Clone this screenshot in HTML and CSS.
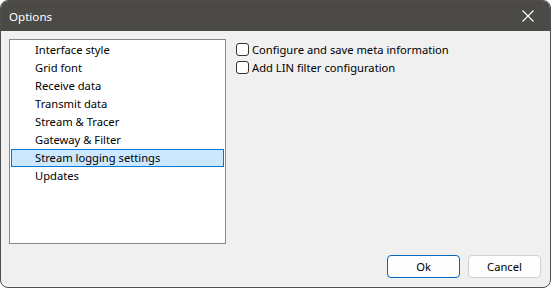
FILE: index.html
```html
<!doctype html>
<html lang="en">
<head>
    <meta charset="UTF-8">
    <title>Options</title>
    <link rel="stylesheet" href="styles.css">
</head>
<body>
    <div class="window">
        <div class="titlebar">
            <span class="title">Options</span>
            <svg class="close" width="12" height="12" viewBox="0 0 12 12">
                <path d="M0.5 0.5 L11.5 11.5 M11.5 0.5 L0.5 11.5" stroke="#fff" stroke-width="1.1" fill="none"/>
            </svg>
        </div>
        <div class="content">
            <div class="main">
                <ul class="list">
                    <li class="item">Interface style</li>
                    <li class="item">Grid font</li>
                    <li class="item">Receive data</li>
                    <li class="item">Transmit data</li>
                    <li class="item">Stream &amp; Tracer</li>
                    <li class="item">Gateway &amp; Filter</li>
                    <li class="item selected">Stream logging settings</li>
                    <li class="item">Updates</li>
                </ul>
                <div class="pane">
                    <label class="check"><span class="box"></span>Configure and save meta information</label>
                    <label class="check"><span class="box"></span>Add LIN filter configuration</label>
                </div>
            </div>
            <div class="footer">
                <button class="btn default">Ok</button>
                <button class="btn">Cancel</button>
            </div>
        </div>
    </div>
</body>
</html>
```

FILE: styles.css
```css
*{
    box-sizing: border-box;
}
body{
    margin: 0;
    background: #fff;
    font-family: "Noto Sans", "Open Sans", sans-serif;
    font-size: 11.2px;
    color: #000;
}
.window{
    width: 551px;
    height: 288px;
    border: 1px solid #4f4e4c;
    border-radius: 8px;
    overflow: hidden;
    background: #f0f0f0;
    display: flex;
    flex-direction: column;
}
.titlebar{
    height: 30px;
    background: #4b4a47;
    display: flex;
    align-items: center;
    justify-content: space-between;
    padding: 0 16px 0 8px;
    flex-shrink: 0;
}
.title{
    color: #fff;
    font-size: 11.6px;
}
.close{
    display: block;
}
.content{
    flex: 1;
    display: flex;
    flex-direction: column;
    padding: 8px 9px 9px 8px;
}
.main{
    display: flex;
    gap: 10px;
}
.list{
    list-style: none;
    margin: 0;
    width: 217px;
    height: 205px;
    padding: 1px;
    border: 1px solid #828790;
    background: #fff;
}
.item{
    height: 18px;
    line-height: 16px;
    padding-left: 23px;
    border: 1px solid transparent;
    white-space: nowrap;
}
.item.selected{
    background: #cce8ff;
    border-color: #0078d7;
}
.pane{
    display: flex;
    flex-direction: column;
    padding-top: 1px;
}
.check{
    display: flex;
    align-items: center;
    height: 18px;
    gap: 3px;
}
.box{
    width: 13px;
    height: 13px;
    border: 1px solid #333;
    border-radius: 3px;
    background: #fff;
}
.footer{
    margin-top: auto;
    display: flex;
    justify-content: flex-end;
    gap: 8px;
}
.btn{
    width: 73px;
    height: 23px;
    font-family: inherit;
    font-size: 11.2px;
    color: #000;
    background: #fdfdfd;
    border: 1px solid #d0d0d0;
    border-radius: 4px;
    padding: 0;
}
.btn.default{
    border-color: #0067c0;
}
```
